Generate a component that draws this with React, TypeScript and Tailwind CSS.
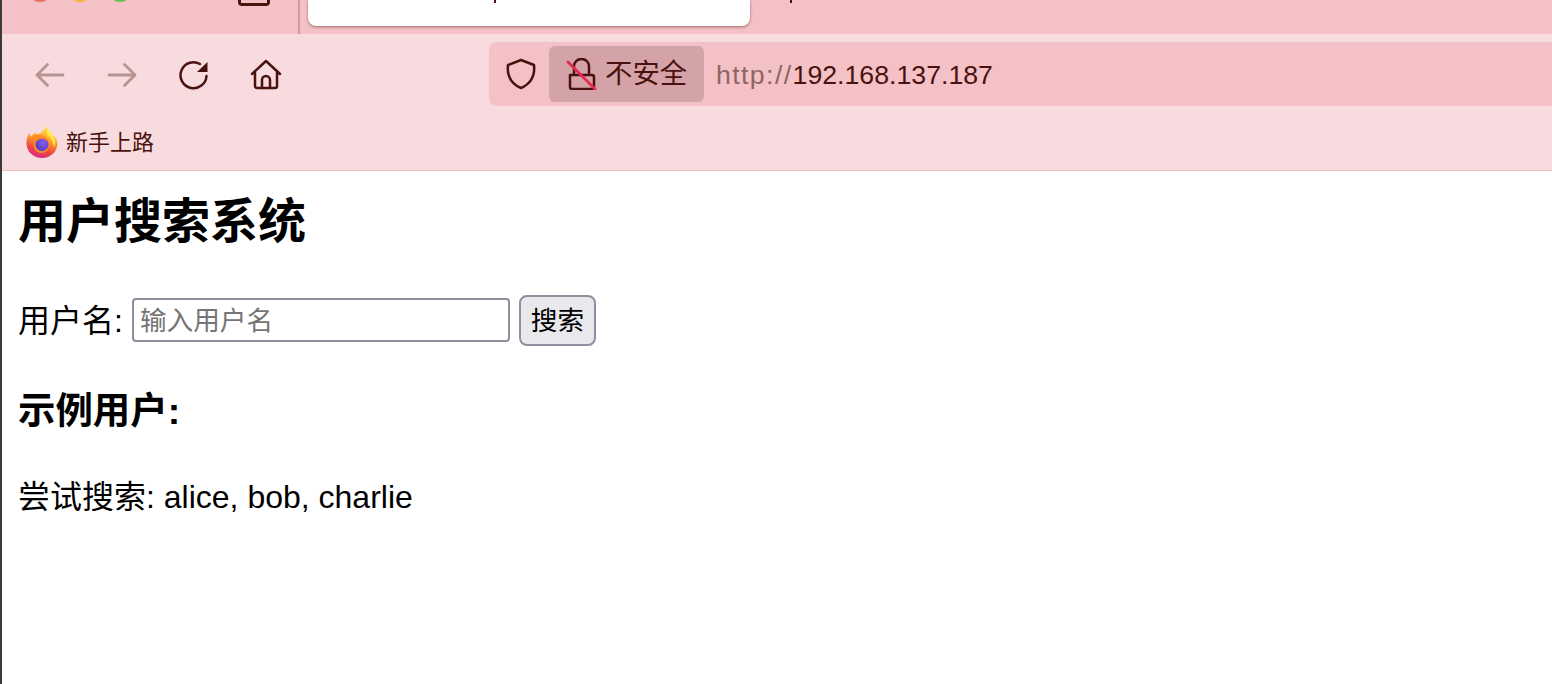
function BackIcon() {
  return (
    <svg width="32" height="32" viewBox="0 0 32 32" fill="none" stroke="#b8938f" strokeWidth="2.800" strokeLinecap="round" strokeLinejoin="round">
      <path d="M3 16h26M13.500 5.500 3 16l10.500 10.500" />
    </svg>
  );
}

function ForwardIcon() {
  return (
    <svg width="32" height="32" viewBox="0 0 32 32" fill="none" stroke="#b8938f" strokeWidth="2.800" strokeLinecap="round" strokeLinejoin="round">
      <path d="M3 16h26M18.500 5.500 29 16 18.500 26.500" />
    </svg>
  );
}

function ReloadIcon() {
  return (
    <svg width="32" height="32" viewBox="0 0 32 32" fill="none">
      <path d="M28.500 17A13 13 0 1 1 22 5" stroke="#4a120e" strokeWidth="2.500" strokeLinecap="round" />
      <path d="M29.500 3v10H19z" fill="#4a120e" />
    </svg>
  );
}

function HomeIcon() {
  return (
    <svg width="32" height="32" viewBox="0 0 32 32" fill="none" stroke="#4a120e" strokeWidth="2.500" strokeLinecap="round" strokeLinejoin="round">
      <path d="M2 15 16 2l14 13M5 13v14a2 2 0 0 0 2 2h18a2 2 0 0 0 2-2V13" />
      <path d="M12 29v-8a4 4 0 0 1 8 0v8" />
    </svg>
  );
}

function ShieldIcon() {
  return (
    <svg width="32" height="32" viewBox="0 0 32 32" fill="none" stroke="#4a120e" strokeWidth="2.500" strokeLinejoin="round">
      <path d="M16 2 29 7c1 9-2 18-13 23C5 25 2 16 3 7z" />
    </svg>
  );
}

function LockIcon() {
  return (
    <svg width="32" height="32" viewBox="0 0 32 32" fill="none">
      <path d="M9 17V8a7.500 7 0 0 1 15 0v9" stroke="#4a120e" strokeWidth="2.500" />
      <path d="M5 17h22a2 2 0 0 1 2 2v10a2 2 0 0 1-2 2H7a2 2 0 0 1-2-2z" stroke="#4a120e" strokeWidth="2.500" strokeLinejoin="round" />
      <path d="M3 4l27 27" stroke="#e8294f" strokeWidth="2.800" strokeLinecap="round" />
    </svg>
  );
}

function FirefoxLogo() {
  return (
    <svg width="32" height="32" viewBox="0 0 32 32">
      <defs>
        <linearGradient id="fx" x1="0.7" y1="0" x2="0.4" y2="1">
          <stop offset="0" stopColor="#ffe84a" />
          <stop offset="0.45" stopColor="#ff9a2a" />
          <stop offset="0.75" stopColor="#f0453f" />
          <stop offset="1" stopColor="#d92b8a" />
        </linearGradient>
        <radialGradient id="fxc" cx="0.6" cy="0.35" r="0.7">
          <stop offset="0" stopColor="#8f5ae8" />
          <stop offset="1" stopColor="#4f3ac0" />
        </radialGradient>
      </defs>
      <path d="M20 0c.5 3 3 5.500 6 8 3 3 5.500 6 5.500 9.500a15.500 14.500 0 0 1-31 0C.5 14 1 10 3.500 7c0 1.500.5 2.500 1.500 3.500C6.500 8.500 8 7.500 10 6.500c0 .5.5 1.500 1 2 3.500-1 7-3.500 9-8.500z" fill="url(#fx)" />
      <path d="M21 2c2.500 4 7 6 8 12 .5 3 0 5-1 7-1-6-3-10-7-12z" fill="#ffe84a" />
      <circle cx="15.500" cy="19" r="8" fill="#f58a2a" />
      <circle cx="16" cy="18.500" r="6.500" fill="url(#fxc)" />
      <path d="M5 12c3-3 8-4 12-2.500 2.500 1 4.500 3 5 6-2.500-2-4.500-3-8-2.500-1.500.5-2 2-4 2-2 0-3.500-1.500-5-3z" fill="#ff8a22" />
    </svg>
  );
}

export default function App() {
  return (
    <div lang="zh-CN" className="h-[684px] w-[1552px] overflow-hidden bg-white border-l-2 border-l-[#3a3a3a] text-black font-['Liberation_Sans','Noto_Sans_CJK_SC',sans-serif]">
      {/* Tab strip, cut off by the top of the capture */}
      <div className="h-[34px] bg-[#f3c1c6] flex items-start overflow-hidden">
        <div className="flex gap-[16px] pl-[26px] -mt-[22px]">
          <span className="w-[24px] h-[24px] rounded-full bg-[#ec6a5e]" />
          <span className="w-[24px] h-[24px] rounded-full bg-[#f0b53a]" />
          <span className="w-[24px] h-[24px] rounded-full bg-[#5fc454]" />
        </div>
        <div className="ml-[106px] w-[32px] h-[6px] border-[3px] border-t-0 border-[#4a120e] rounded-b-[4px]" />
        <div className="ml-[28px] w-[2px] h-[34px] bg-[#c99a9e]" />
        <div className="ml-[8px] w-[442px] h-[26px] bg-white rounded-b-[8px] shadow-[0_1px_3px_rgba(90,30,30,0.55)] pl-[186px]">
          <div className="w-[2px] h-[3px] bg-[#4a120e]" />
        </div>
        <div className="ml-[40px] w-[2px] h-[3px] bg-[#4a120e]" />
      </div>

      {/* Navigation toolbar */}
      <div className="h-[137px] bg-[#f8dbde] border-b border-b-[#f5bfc8]">
        <div className="flex items-start pt-[8px] h-[82px]">
          <div className="flex items-center pl-[32px] pt-[17px] gap-[40px] w-[487px]">
            <BackIcon />
            <ForwardIcon />
            <ReloadIcon />
            <HomeIcon />
          </div>
          <div className="flex-1 h-[64px] bg-[#f3c1c6] rounded-l-[8px] flex items-center pl-[16px] text-[#4a120e]">
            <ShieldIcon />
            <div className="ml-[12px] w-[155px] h-[56px] bg-[#d4a3a7] rounded-[6px] flex items-center pl-[16px]">
              <LockIcon />
              <span className="ml-[8px] text-[27.400px] leading-none">不安全</span>
            </div>
            <div className="ml-[12px] pt-[2px] text-[26.700px] leading-none">
              <span className="text-[#8e6561] tracking-[1.400px]">http://</span>192.168.137.187
            </div>
          </div>
        </div>
        <div className="flex items-center pl-[24px] pt-[10px] text-[#4a120e]">
          <FirefoxLogo />
          <span className="ml-[8px] pt-[2px] text-[22px] leading-none">新手上路</span>
        </div>
      </div>

      {/* Page content */}
      <div className="pl-[16px]">
        <h1 className="pt-[23px] text-[48px] leading-[56px] font-bold">用户搜索系统</h1>
        <div className="mt-[44px] h-[52px] flex items-center text-[32px] leading-[38px]">
          <span className="pt-[2px]">用户名:</span>
          <input
            placeholder="输入用户名"
            className="ml-[9px] w-[378px] h-[44px] border-2 border-[#8f8f9d] rounded-[4px] pl-[6px] pr-[7px] pt-[2px] text-[26.670px] bg-white outline-none placeholder:text-[#757575]"
          />
          <button className="ml-[9px] w-[77px] h-[51px] border-2 border-[#8f8f9d] rounded-[8px] bg-[#e9e9ed] pt-[2px] text-[26.670px] leading-none text-black">
            搜索
          </button>
        </div>
        <h3 className="mt-[43px] text-[37.440px] leading-[44px] font-bold">示例用户:</h3>
        <p className="mt-[45px] text-[32px] leading-[38px]">尝试搜索: alice, bob, charlie</p>
      </div>
    </div>
  );
}
